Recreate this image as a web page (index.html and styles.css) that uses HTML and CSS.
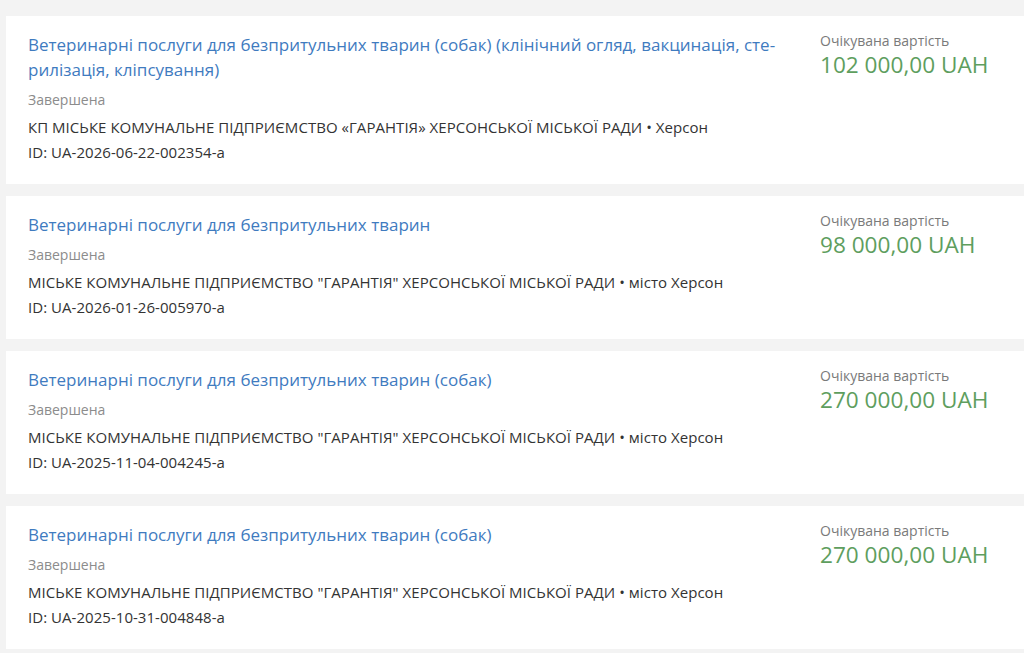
FILE: index.html
```html
<!DOCTYPE html>
<html lang="uk">
<head>
  <meta charset="UTF-8">
  <meta name="viewport" content="width=device-width, initial-scale=1.0">
  <title>Закупівлі</title>
  <link rel="stylesheet" href="styles.css">
</head>
<body>
  <div class="tender-list">
    <div class="tender-card">
      <div class="tender-info">
        <a class="tender-title" href="#">Ветеринарні послуги для безпритульних тварин (собак) (клінічний огляд, вакцинація, сте&shy;рилізація, кліпсування)</a>
        <div class="tender-status">Завершена</div>
        <div class="tender-org">КП МІСЬКЕ КОМУНАЛЬНЕ ПІДПРИЄМСТВО «ГАРАНТІЯ» ХЕРСОНСЬКОЇ МІСЬКОЇ РАДИ • Херсон</div>
        <div class="tender-id">ID: UA-2026-06-22-002354-a</div>
      </div>
      <div class="tender-price">
        <div class="price-label">Очікувана вартість</div>
        <div class="price-value">102 000,00 UAH</div>
      </div>
    </div>

    <div class="tender-card">
      <div class="tender-info">
        <a class="tender-title" href="#">Ветеринарні послуги для безпритульних тварин</a>
        <div class="tender-status">Завершена</div>
        <div class="tender-org">МІСЬКЕ КОМУНАЛЬНЕ ПІДПРИЄМСТВО "ГАРАНТІЯ" ХЕРСОНСЬКОЇ МІСЬКОЇ РАДИ • місто Херсон</div>
        <div class="tender-id">ID: UA-2026-01-26-005970-a</div>
      </div>
      <div class="tender-price">
        <div class="price-label">Очікувана вартість</div>
        <div class="price-value">98 000,00 UAH</div>
      </div>
    </div>

    <div class="tender-card">
      <div class="tender-info">
        <a class="tender-title" href="#">Ветеринарні послуги для безпритульних тварин (собак)</a>
        <div class="tender-status">Завершена</div>
        <div class="tender-org">МІСЬКЕ КОМУНАЛЬНЕ ПІДПРИЄМСТВО "ГАРАНТІЯ" ХЕРСОНСЬКОЇ МІСЬКОЇ РАДИ • місто Херсон</div>
        <div class="tender-id">ID: UA-2025-11-04-004245-a</div>
      </div>
      <div class="tender-price">
        <div class="price-label">Очікувана вартість</div>
        <div class="price-value">270 000,00 UAH</div>
      </div>
    </div>

    <div class="tender-card">
      <div class="tender-info">
        <a class="tender-title" href="#">Ветеринарні послуги для безпритульних тварин (собак)</a>
        <div class="tender-status">Завершена</div>
        <div class="tender-org">МІСЬКЕ КОМУНАЛЬНЕ ПІДПРИЄМСТВО "ГАРАНТІЯ" ХЕРСОНСЬКОЇ МІСЬКОЇ РАДИ • місто Херсон</div>
        <div class="tender-id">ID: UA-2025-10-31-004848-a</div>
      </div>
      <div class="tender-price">
        <div class="price-label">Очікувана вартість</div>
        <div class="price-value">270 000,00 UAH</div>
      </div>
    </div>
  </div>
</body>
</html>
```

FILE: styles.css
```css
html, body { overflow: hidden; }
body { margin: 0; font-family: "Open Sans", "Noto Sans", sans-serif; background: #f3f3f3; color: #333; }
.tender-list { padding: 16px 0 0 6px; }
.tender-card { display: flex; width: 1040px; background: #fff; padding: 16px 0 21px 22px; margin-bottom: 12px; box-sizing: border-box; }
.tender-info { flex: 0 0 770px; }
.tender-title { display: block; color: #3f7bbf; font-size: 17px; line-height: 25px; text-decoration: none; margin-bottom: 8px; }
.tender-status { color: #8c8c8c; font-size: 14px; line-height: 20px; margin-bottom: 6px; }
.tender-org, .tender-id { font-size: 15px; line-height: 22px; letter-spacing: 0.04px; }
.tender-id { margin-top: 3px; }
.tender-price { margin-left: 22px; }
.price-label { color: #7a7a7a; font-size: 14px; line-height: 20px; margin-top: -1px; }
.price-value { color: #5e9e5e; font-size: 22.6px; line-height: 30px; margin-top: -1px; }
```
